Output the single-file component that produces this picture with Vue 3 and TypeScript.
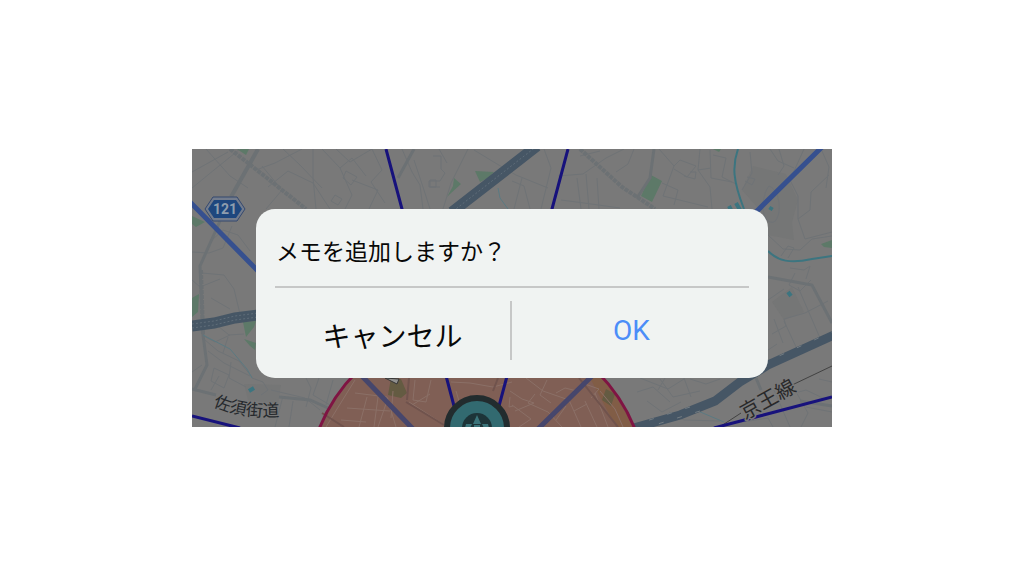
<script setup lang="ts">
import { ref } from 'vue'

const message = 'メモを追加しますか？'
const choice = ref<'cancel' | 'ok' | null>(null)

const thinRoads: string[] = [
  'M192 172L228 152M192 188L214 170L240 149M206 149L230 176L248 188M256 170L275 163L302 149M262 166L282 190L266 209M268 187L288 171L313 183L330 209M283 149L300 165L322 188M313 149V178L316 209M322 149L340 168L352 195L345 209M336 149L350 162L372 149M340 168L352 158L366 176M352 180L378 190L369 209M346 171L357 177L351 185L343 178ZM331 201L335 195L342 199L338 205ZM372 149L382 170L371 182L385 203',
  'M402 149L412 172L420 185L423 209M414 160L424 190L430 209M433 156H441V169L445 173L440 181H429V187H440M430 180H436V187H430ZM468 149L451 183L443 209M439 149L447 163M474 150L497 164L516 175L548 188M521 165L539 149M512 181L524 186L530 209M522 178L514 209M544 149L551 168L541 209M558 176L583 174L606 158L624 149M577 178L581 209M586 174L589 209M597 178L599 209M561 200L584 203L620 208',
  'M580 156L600 151M634 149L628 164L616 172M659 149L674 166L680 160L696 166L687 177L674 169M662 183L678 190L674 205M674 166L663 196L708 207M700 149L698 170L710 187L712 209M710 150L711 178L732 182M713 155L726 158L722 177L736 184M698 170L711 168M690 172L696 172L695 179L684 176M750 152L752 173L742 190M770 149L778 161L794 168M779 149L784 166L778 175M747 177L755 179L752 185L745 181M804 149L790 180L798 196L798 219M798 219L810 210L811 192L829 175M822 151L829 167L826 188M798 219L805 239L832 232',
  'M769 186C761 196 761 220 770 222C782 226 783 191 769 186M768 235L783 249L800 250L812 239L832 236M781 256L788 246L794 248L788 258M790 268L804 270L810 266L806 279M795 273L789 285L800 291L811 280M768 300L784 289M772 334L786 326L784 319L805 313L828 301M798 287L820 338M774 319L783 343M784 321L797 349M768 350L777 344',
  'M192 252L209 253L223 248L232 226M212 240L223 230L238 235L250 251M202 273L224 275L234 289L240 314M192 280L200 287L220 279M211 298L230 309M213 322L229 335L244 334M202 335L215 342L230 335M205 340L218 351L239 361L252 377M208 351L224 363L250 376M228 337L223 353M214 368L229 375L224 388L211 381ZM231 362L229 378L246 387M192 372L202 365M219 376L211 390M252 378L263 382L268 390L261 395M271 390L305 398L320 410M306 378L311 388L306 407M319 378L313 395L330 405M333 380L326 405M283 396L275 427M293 401L289 427',
  'M640 378L668 389L684 379M660 379L673 397L700 391M637 392L653 387L670 402M647 401L662 412L681 402M690 379L706 384L720 379M669 412L684 420L720 421M774 390L790 427M780 397L806 390L825 399M795 390L808 413L801 427M819 379L832 382M806 407L832 412M737 423L768 418L773 427M665 378L658 390M684 378L691 397',
]

const zoneRoads: string[] = [
  'M355 380L337 409L326 427M355 393L387 397L396 427M347 408L390 411M367 397L359 427M378 397L374 427M341 420L366 422M388 398L378 427M393 391L391 418',
  'M415 380L413 400L426 402L431 380M409 402L440 422L447 427M430 394L412 405M451 382L470 383L493 387L512 382M510 391L522 399L534 403L515 411M526 378L543 391L569 400L581 427M535 394L528 403L548 412L562 427M547 380L540 395L551 403M556 393L565 388L577 391M566 406L556 420M582 383L599 389L591 398M574 411L587 404M512 405L531 419L519 427M595 393L608 427M600 391L615 409L623 427M585 401L597 427M456 391L459 401L464 400M510 397L509 407L513 406',
]
</script>

<template>
  <main class="page">
    <div class="scene">
      <svg class="map" viewBox="192 149 640 278" preserveAspectRatio="xMidYMid slice" aria-hidden="true">
        <defs>
          <path id="street-curve" d="M213 406Q242 419 281 416" />
          <path id="rail-curve" d="M745 420L799 390" />
        </defs>
        <rect x="192" y="149" width="640" height="278" fill="#797979" />

        <path fill="#757676" d="M753 166L786 174L798 200L792 222L794 240L768 235L764 215L742 190ZM772 302L792 287L804 312L784 320ZM244 384L281 385L278 404L248 400Z" />
        <g fill="#5d7968">
          <path d="M237 149H249L246 155ZM192 216L205 222L196 227L192 224ZM192 298L199 294L198 312L192 317ZM243 322L256 321L254 327L246 337ZM244 339L256 343L255 350L250 346Z" />
          <path d="M475 171L494 172L488 178L480 182ZM454 178L461 184L450 194L447 197L453 186ZM651 175L662 181L652 202L641 196ZM713 149H721L719 152ZM821 244L832 240V248L824 247Z" />
        </g>

        <g class="thin">
          <path v-for="(road, i) in thinRoads" :key="i" :d="road" />
        </g>

        <g fill="none" stroke="#6c7174" stroke-width="3">
          <path stroke-width="4" d="M258 149L231 197" />
          <path d="M414 149L398 178M654 149L650 178L637 198M220 221L200 266L202 310L203 335L207 365L194 391M192 389L216 395M279 397L310 400L328 408M768 277L790 281L812 285L832 323M756 378L761 390M800 401L832 406" />
          <path stroke-width="4" stroke-dasharray="4 1" d="M230 149L248 163L306 209M580 149L622 187L655 209M201 270L203 335" />
        </g>

        <g fill="none" stroke="#3c7580" stroke-width="2">
          <path d="M738 149C732 166 733 181 744 209M768 251C778 261 790 264 812 259L832 256" />
          <path stroke="#5b7a82" stroke-width="1" d="M498 188L500 198L508 209M203 335L230 349L247 369L252 378M698 411L724 422" />
          <path stroke-width="4" d="M729 206L731 210M736 203L740 210M770 210L772 207M249 391L254 388M788 292L791 296" />
        </g>

        <g fill="none" stroke="#465665" stroke-width="11">
          <path d="M537 146L452 212M192 326L214 323L235 318L258 315" />
          <path stroke-width="9" d="M836 334L768 365L740 382L715 401L680 415L630 429" />
          <g stroke="#5f6d79" stroke-width="1" stroke-dasharray="2 2">
            <path d="M537 146L452 212M192 324L214 321L235 316L258 313M192 328L214 325L235 320L258 317" />
          </g>
          <path stroke="#747d83" stroke-width="1" stroke-dasharray="5 14" d="M836 330L768 361M690 407L640 423M700 411L648 427" />
        </g>

        <path fill="none" stroke="#424242" stroke-width="1" d="M832 366L790 386M741 413L718 428" />

        <circle cx="477" cy="492" r="170" fill="#805f55" />
        <path fill="#815d46" d="M590 378H604L635 427H616Z" />
        <path fill="#645b42" d="M391 378L401 379L407 393L401 398L388 395ZM606 389L615 394L611 406L602 400Z" />
        <g class="zone-thin">
          <path v-for="(road, i) in zoneRoads" :key="i" :d="road" />
        </g>
        <path fill="none" stroke="#70534d" stroke-width="2" d="M406 402L444 425M498 378L493 391M322 413L344 427M579 378L618 427M409 378L407 400" />
        <path fill="#91908e" stroke="#353536" stroke-width="1" d="M385 378L399 379L397 384Z" />

        <g fill="none" stroke-width="5">
          <path stroke="#36508f" d="M190 202L258 271M822 147L756 212" />
          <path stroke="#46466c" d="M360 374L413 429M594 374L538 429" />
          <path stroke="#17127c" stroke-width="3" d="M386 149L402 209L454 406M568 149L552 209L499 406M192 416L240 428M832 397L714 428" />
          <circle cx="477" cy="492" r="170" stroke="#7f1443" stroke-width="3" />
        </g>

        <circle cx="477" cy="428" r="30" fill="#326a70" stroke="#222c2e" stroke-width="6" />
        <circle cx="477" cy="428" r="15" fill="#1d3438" />
        <g fill="#3b747a">
          <path d="M477 415L481 424H473ZM466 424H472L470 428H465ZM482 424H488L489 428H484ZM474 425H480V428H474Z" />
        </g>

        <path fill="#737c8c" stroke="#34486f" stroke-width="1" d="M213 197H237L245 209L237 221H213L205 209Z" />
        <path fill="#1e477e" d="M214 200H236L242 209L236 218H214L208 209Z" />
        <text class="route" x="225" y="214" text-anchor="middle">121</text>

        <text class="street"><textPath href="#street-curve">佐須街道</textPath></text>
        <text class="rail"><textPath href="#rail-curve">京王線</textPath></text>
      </svg>

      <section class="dialog" role="dialog" aria-labelledby="dialog-message">
        <h1 id="dialog-message" class="message">{{ message }}</h1>
        <div class="actions">
          <button type="button" class="action cancel" @click="choice = 'cancel'">キャンセル</button>
          <button type="button" class="action ok" @click="choice = 'ok'">OK</button>
        </div>
      </section>
    </div>
  </main>
</template>

<style>
body {
  margin: 0;
  background: #ffffff;
}
</style>

<style scoped>
.page {
  display: flex;
  align-items: center;
  justify-content: center;
  min-height: 100vh;
  font-family: Roboto, "Noto Sans CJK JP", sans-serif;
}

.scene {
  position: relative;
  display: grid;
  box-sizing: border-box;
  width: 62.5%;
  padding: 60px 64px 49px;
  overflow: hidden;
  background: #797979;
}

.map {
  position: absolute;
  inset: 0;
  width: 100%;
  height: 100%;
}

.thin {
  fill: none;
  stroke: #6f7376;
  stroke-width: 1;
}

.zone-thin {
  fill: none;
  stroke: #8b7067;
  stroke-width: 1;
}

.route {
  font: 700 14px Roboto, sans-serif;
  fill: #8e9eae;
}

.street {
  font: 400 17px "Noto Sans CJK JP", sans-serif;
  fill: #26292d;
}

.rail {
  font: 400 20px "Noto Sans CJK JP", sans-serif;
  fill: #29292a;
  stroke: #797979;
  stroke-width: 3;
  stroke-linejoin: round;
  paint-order: stroke;
}

.dialog {
  position: relative;
  padding: 22px 19px 18px;
  border-radius: 19px;
  background: #f0f3f2;
}

.message {
  margin: 0;
  padding: 0 1px 17px;
  border-bottom: 2px solid #c6c7c7;
  color: #080808;
  font: 400 23px/38px "Noto Sans CJK JP", sans-serif;
}

.actions {
  display: grid;
  grid-template-columns: 1fr 1fr;
  padding-top: 13px;
}

.action {
  height: 59px;
  margin: 0;
  padding: 0;
  border: 0;
  background: transparent;
  cursor: pointer;
}

.cancel {
  padding-top: 8px;
  border-right: 2px solid #c6c7c7;
  color: #080808;
  font: 400 28px/40px "Noto Sans CJK JP", sans-serif;
}

.ok {
  padding-left: 2px;
  color: #4b8df8;
  font: 400 28px/40px Roboto, sans-serif;
}
</style>
